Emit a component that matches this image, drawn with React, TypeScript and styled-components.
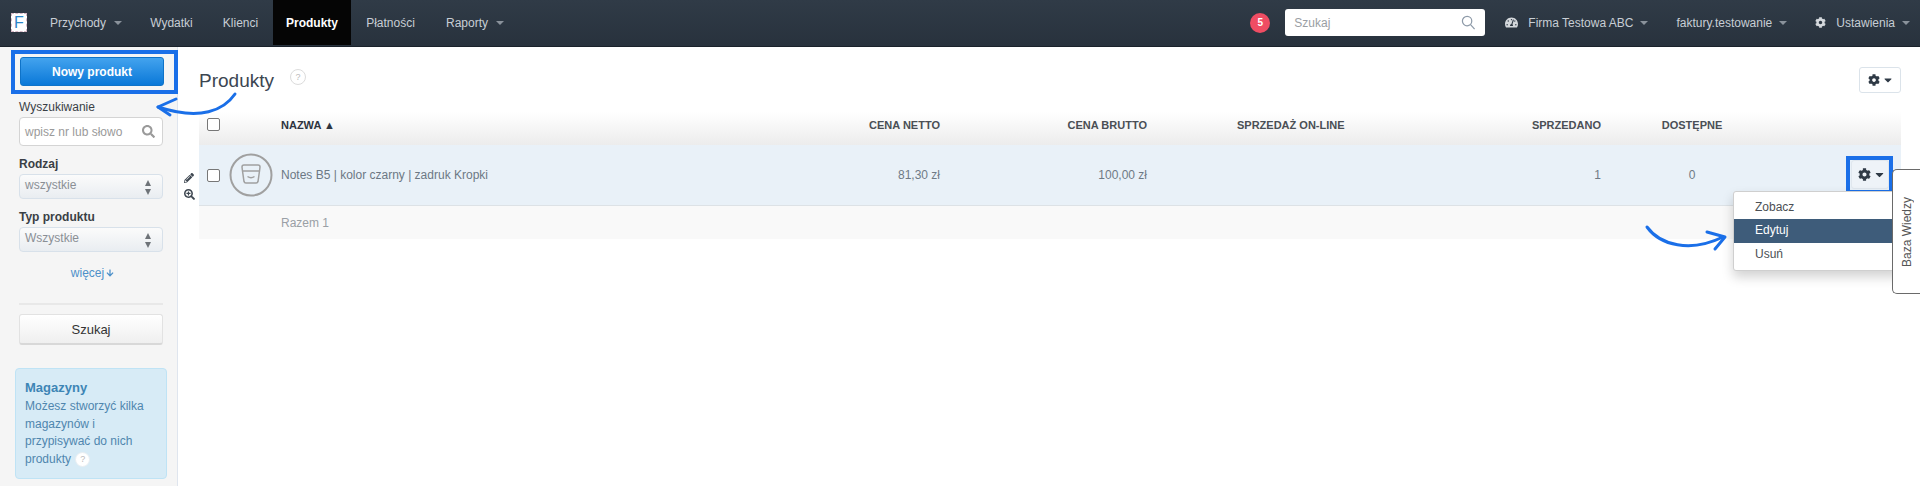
import React from 'react'
import styled, { createGlobalStyle } from 'styled-components'
import { FaCog, FaPencilAlt, FaSearchPlus, FaArrowDown, FaTachometerAlt, FaSearch, FaCaretDown } from 'react-icons/fa'

const GlobalStyle = createGlobalStyle`
  html, body {
    margin: 0;
    padding: 0;
    height: 486px;
    overflow: hidden;
    background: #fff;
    font-family: "Liberation Sans", Arial, sans-serif;
    font-size: 12px;
    color: #444;
  }
  * { box-sizing: border-box; }
`

const LEFT_NAV = [
  { label: 'Przychody', caret: true, width: 98 },
  { label: 'Wydatki', width: 73 },
  { label: 'Klienci', width: 65 },
  { label: 'Produkty', active: true, width: 78 },
  { label: 'Płatności', width: 79 },
  { label: 'Raporty', caret: true, width: 90 },
]

export default function App() {
  return (
    <Page>
      <GlobalStyle />
      <Navbar>
        <Logo>F</Logo>
        <NavList>
          {LEFT_NAV.map((item) => (
            <NavItem key={item.label} $active={item.active} $width={item.width}>
              {item.label}
              {item.caret && <Caret />}
            </NavItem>
          ))}
        </NavList>
        <NavRight>
          <Badge>5</Badge>
          <NavSearch>
            <span>Szukaj</span>
            <SearchGlyph viewBox="0 0 16 16">
              <circle cx="6.5" cy="6.5" r="5" />
              <path d="M10.2 10.2 14.5 15" />
            </SearchGlyph>
          </NavSearch>
          <NavLink $left={20}>
            <FaTachometerAlt size={13} />
            <span>Firma Testowa ABC</span>
            <Caret />
          </NavLink>
          <NavLink $left={28}>
            <span>faktury.testowanie</span>
            <Caret />
          </NavLink>
          <NavLink $left={28}>
            <FaCog size={11} />
            <span>Ustawienia</span>
            <Caret />
          </NavLink>
        </NavRight>
      </Navbar>

      <Content>
        <Sidebar>
          <PrimaryWrap>
            <PrimaryButton>Nowy produkt</PrimaryButton>
            <Highlight />
            <BackArrow viewBox="0 0 90 30">
              <path d="M79 1C68 17 45 28 2 14" />
              <path d="M20 6 2 14 14 22" />
            </BackArrow>
          </PrimaryWrap>

          <FieldLabel>Wyszukiwanie</FieldLabel>
          <SearchField>
            <span>wpisz nr lub słowo</span>
            <FaSearch size={13} />
          </SearchField>

          <FieldLabel $bold $top={11}>Rodzaj</FieldLabel>
          <SelectField>
            wszystkie
            <Spinner />
          </SelectField>

          <FieldLabel $bold $top={11}>Typ produktu</FieldLabel>
          <SelectField>
            Wszystkie
            <Spinner />
          </SelectField>

          <MoreLink>
            więcej <FaArrowDown size={8} />
          </MoreLink>

          <Divider />
          <SearchButton>Szukaj</SearchButton>

          <InfoBox>
            <InfoTitle>Magazyny</InfoTitle>
            <InfoText>
              Możesz stworzyć kilka magazynów i przypisywać do nich produkty <HelpDot $small>?</HelpDot>
            </InfoText>
          </InfoBox>
        </Sidebar>

        <Main>
          <TitleRow>
            <Title>Produkty</Title>
            <HelpDot>?</HelpDot>
            <GearButton $top>
              <FaCog size={12} />
              <FaCaretDown size={12} />
            </GearButton>
          </TitleRow>

          <TableHead>
            <CheckCell><Check /></CheckCell>
            <span />
            <NameHead>NAZWA ▲</NameHead>
            <RightCell>CENA NETTO</RightCell>
            <RightCell>CENA BRUTTO</RightCell>
            <OnlineCell>SPRZEDAŻ ON-LINE</OnlineCell>
            <RightCell>SPRZEDANO</RightCell>
            <CenterCell>DOSTĘPNE</CenterCell>
            <span />
          </TableHead>

          <TableRow>
            <RowTools>
              <FaPencilAlt size={10} />
              <FaSearchPlus size={11} />
            </RowTools>
            <CheckCell><Check /></CheckCell>
            <Thumb viewBox="0 0 44 44">
              <circle cx="22" cy="22" r="20.500" />
              <BagLines d="M13 14a2 2 0 0 1 2-2h14a2 2 0 0 1 2 2l-0.500 4h-17zM13.500 18l1.500 10.500a2 2 0 0 0 2 1.500h10a2 2 0 0 0 2-1.500l1.500-10.500M18.500 23.500c2 1.500 5 1.500 7 0" />
            </Thumb>
            <NameCell>Notes B5 | kolor czarny | zadruk Kropki</NameCell>
            <RightCell>81,30 zł</RightCell>
            <RightCell>100,00 zł</RightCell>
            <OnlineCell />
            <RightCell>1</RightCell>
            <CenterCell>0</CenterCell>
            <ActionCell>
              <GearButton>
                <FaCog size={13} />
                <FaCaretDown size={13} />
                <Highlight $tight />
              </GearButton>
              <Menu>
                <MenuItem>Zobacz</MenuItem>
                <MenuItem $active>Edytuj</MenuItem>
                <MenuItem>Usuń</MenuItem>
              </Menu>
              <ForwardArrow viewBox="0 0 84 26">
                <path d="M2 2C15 20 45 28 78 12" />
                <path d="M62 7 80 12 70 24" />
              </ForwardArrow>
            </ActionCell>
          </TableRow>

          <TableFoot>
            <FootLabel>Razem 1</FootLabel>
          </TableFoot>
        </Main>
      </Content>

      <KnowledgeTab>
        <span>Baza Wiedzy</span>
      </KnowledgeTab>
    </Page>
  )
}

const Page = styled.div`
  position: relative;
  width: 1920px;
  height: 486px;
  overflow: hidden;
`

const Navbar = styled.div`
  display: flex;
  align-items: stretch;
  height: 47px;
  padding-left: 11px;
  background: linear-gradient(#303b47, #28323d);
  border-bottom: 1px solid #1a222b;
  color: #c8ced5;
`

const Logo = styled.div`
  align-self: center;
  width: 16px;
  height: 19px;
  margin-top: -2px;
  background: #fff;
  border: 1px dashed #d5b8c5;
  color: #2a85c8;
  font-size: 16px;
  line-height: 17px;
  text-align: center;
`

const NavList = styled.div`
  display: flex;
  margin-left: 10px;
  height: 45px;
`

const NavItem = styled.div<{ $active?: boolean; $width: number }>`
  display: flex;
  align-items: center;
  justify-content: center;
  gap: 6px;
  width: ${(p) => p.$width}px;
  background: ${(p) => (p.$active ? '#050505' : 'transparent')};
  color: ${(p) => (p.$active ? '#fff' : '#c8ced5')};
  font-weight: ${(p) => (p.$active ? 700 : 400)};
  font-size: 12px;
`

const Caret = styled.i`
  display: inline-block;
  width: 0;
  height: 0;
  margin-left: 2px;
  border-left: 4px solid transparent;
  border-right: 4px solid transparent;
  border-top: 4px solid #8a929b;
`

const NavRight = styled.div`
  display: flex;
  align-items: center;
  margin-left: auto;
  padding-right: 10px;
  height: 45px;
`

const Badge = styled.div`
  display: flex;
  align-items: center;
  justify-content: center;
  width: 20px;
  height: 20px;
  border-radius: 50%;
  background: #ef4d63;
  color: #fff;
  font-size: 10px;
  font-weight: 700;
`

const NavSearch = styled.div`
  display: flex;
  align-items: center;
  justify-content: space-between;
  width: 200px;
  height: 27px;
  margin-left: 15px;
  padding: 0 9px;
  background: #fff;
  border-radius: 3px;
  color: #9a9ea3;
`

const SearchGlyph = styled.svg`
  width: 15px;
  height: 15px;
  fill: none;
  stroke: #8d9aa8;
  stroke-width: 1.3;
`

const NavLink = styled.div<{ $left: number }>`
  display: flex;
  align-items: center;
  gap: 10px;
  margin-left: ${(p) => p.$left}px;
  color: #c8ced5;
  svg { flex: none; color: #d4d8dc; }
  i { margin-left: -3px; }
`

const Content = styled.div`
  display: flex;
  height: 439px;
`

const Sidebar = styled.div`
  flex: none;
  width: 178px;
  padding: 10px 14px 0 19px;
  background: #f5f5f5;
  border-right: 1px solid #dfe5ee;
`

const PrimaryWrap = styled.div`
  position: relative;
  margin-bottom: 14px;
  margin-left: 1px;
`

const PrimaryButton = styled.div`
  display: flex;
  align-items: center;
  justify-content: center;
  width: 144px;
  height: 29px;
  border: 1px solid #0f73c8;
  border-radius: 3px;
  background: linear-gradient(#43a3ee, #0a78d8);
  color: #fff;
  font-size: 12px;
  font-weight: 700;
`

const Highlight = styled.div<{ $tight?: boolean }>`
  position: absolute;
  top: ${(p) => (p.$tight ? -5 : -7)}px;
  left: ${(p) => (p.$tight ? -6 : -9)}px;
  right: ${(p) => (p.$tight ? -5 : -15)}px;
  bottom: ${(p) => (p.$tight ? -6 : -8)}px;
  border: 4px solid #1a6fe8;
  pointer-events: none;
`

const BackArrow = styled.svg`
  position: absolute;
  left: 136px;
  top: 36px;
  width: 90px;
  height: 30px;
  overflow: visible;
  fill: none;
  stroke: #1a6fe8;
  stroke-width: 3;
  stroke-linecap: round;
  stroke-linejoin: round;
`

const FieldLabel = styled.div<{ $bold?: boolean; $top?: number }>`
  margin-top: ${(p) => p.$top ?? 0}px;
  margin-bottom: 3px;
  font-size: 12px;
  line-height: 14px;
  font-weight: ${(p) => (p.$bold ? 700 : 400)};
  color: #3a3f45;
`

const SearchField = styled.div`
  display: flex;
  align-items: center;
  justify-content: space-between;
  width: 144px;
  height: 29px;
  padding: 0 7px 0 5px;
  background: #fff;
  border: 1px solid #d4d4d4;
  border-radius: 4px;
  color: #9a9a9a;
  svg { color: #9a9a9a; }
`

const SelectField = styled.div`
  position: relative;
  display: flex;
  align-items: center;
  width: 144px;
  height: 25px;
  padding: 0 5px 3px;
  background: linear-gradient(#fbfbfb, #e9edf1);
  border: 1px solid #d8e1ea;
  border-radius: 4px;
  color: #8a8f95;
`

const Spinner = styled.i`
  position: absolute;
  right: 10px;
  top: 5px;
  width: 7px;
  height: 15px;
  &::before, &::after {
    content: '';
    position: absolute;
    left: 0;
    width: 0;
    height: 0;
    border-left: 3.500px solid transparent;
    border-right: 3.500px solid transparent;
  }
  &::before { top: 0; border-bottom: 6px solid #6e7378; }
  &::after { bottom: 0; border-top: 6px solid #6e7378; }
`

const MoreLink = styled.div`
  display: flex;
  align-items: center;
  justify-content: center;
  gap: 2px;
  margin-top: 14px;
  padding-left: 3px;
  height: 14px;
  color: #4d90c9;
`

const Divider = styled.div`
  width: 144px;
  height: 2px;
  margin-top: 23px;
  background: #e8e8e8;
`

const SearchButton = styled.div`
  display: flex;
  align-items: center;
  justify-content: center;
  width: 144px;
  height: 31px;
  margin-top: 9px;
  background: linear-gradient(#fff, #efefef);
  border: 1px solid #e2e2e2;
  border-bottom: 2px solid #d8d8d8;
  border-radius: 3px;
  color: #333;
  font-size: 13px;
`

const InfoBox = styled.div`
  width: 152px;
  height: 111px;
  margin: 23px 0 0 -4px;
  padding: 11px 9px 0;
  background: #d7ebf6;
  border: 1px solid #bfe3f5;
  border-radius: 4px;
`

const InfoTitle = styled.div`
  margin-bottom: 2px;
  color: #3d85b5;
  font-size: 13px;
  font-weight: 700;
  line-height: 16px;
`

const InfoText = styled.div`
  color: #4f86ae;
  font-size: 12px;
  line-height: 17.500px;
`

const HelpDot = styled.span<{ $small?: boolean }>`
  display: inline-flex;
  align-items: center;
  justify-content: center;
  width: ${(p) => (p.$small ? 15 : 16)}px;
  height: ${(p) => (p.$small ? 15 : 16)}px;
  margin-left: ${(p) => (p.$small ? 1 : 16)}px;
  margin-top: ${(p) => (p.$small ? 0 : -8)}px;
  vertical-align: middle;
  background: #fff;
  border: 1px solid ${(p) => (p.$small ? '#e8eef2' : '#dcdcdc')};
  border-radius: 50%;
  color: #bbb;
  font-size: 9px;
`

const Main = styled.div`
  flex: 1;
  padding: 0 19px 0 21px;
`

const TitleRow = styled.div`
  display: flex;
  align-items: center;
  height: 65px;
  padding-top: 2px;
`

const Title = styled.h1`
  margin: 0;
  font-size: 19px;
  font-weight: 400;
  color: #3c4651;
`

const GearButton = styled.div<{ $top?: boolean }>`
  position: relative;
  display: flex;
  align-items: center;
  justify-content: center;
  gap: 2px;
  width: ${(p) => (p.$top ? 42 : 38)}px;
  height: ${(p) => (p.$top ? 26 : 29)}px;
  margin-left: ${(p) => (p.$top ? 'auto' : 0)};
  margin-top: ${(p) => (p.$top ? -2 : 0)}px;
  padding-left: ${(p) => (p.$top ? 2 : 4)}px;
  background: ${(p) => (p.$top ? '#fff' : '#eef3f8')};
  border: 1px solid ${(p) => (p.$top ? '#dbe3ea' : '#e0e7ee')};
  border-radius: 3px;
  color: #2f3a46;
`

const COLUMNS = '30px 52px 559px 100px 207px 354px 100px 182px 118px'

const TableHead = styled.div`
  display: grid;
  grid-template-columns: ${COLUMNS};
  align-items: center;
  height: 33px;
  padding-bottom: 8px;
  background: linear-gradient(#fff, #ececec);
  color: #4a4f55;
  font-size: 11px;
  font-weight: 700;
`

const TableRow = styled.div`
  position: relative;
  display: grid;
  grid-template-columns: ${COLUMNS};
  align-items: center;
  height: 61px;
  background: #e9f1f8;
  border-bottom: 1px solid #dde2e6;
  color: #6f7a85;
  font-size: 12px;
`

const RowTools = styled.div`
  position: absolute;
  left: -15px;
  top: 28px;
  display: flex;
  flex-direction: column;
  gap: 6px;
  color: #3d4650;
`

const CheckCell = styled.div`
  padding-left: 8px;
  display: flex;
`

const Check = styled.div`
  width: 13px;
  height: 13px;
  background: #fff;
  border: 1px solid #777;
  border-radius: 2px;
`

const Thumb = styled.svg`
  width: 44px;
  height: 44px;
  margin-top: -1px;
  fill: none;
  stroke: #a0a0a0;
  stroke-width: 2;
`

const BagLines = styled.path`
  stroke-width: 1.500;
`

const NameHead = styled.div`
  font-size: 11px;
  color: #2e3440;
`

const NameCell = styled.div`
  color: #6c7884;
`

const RightCell = styled.div`
  text-align: right;
`

const OnlineCell = styled.div`
  padding-left: 90px;
`

const CenterCell = styled.div`
  text-align: center;
`

const ActionCell = styled.div`
  position: relative;
  display: flex;
  justify-content: flex-end;
  padding-right: 12px;
  margin-top: -2px;
`

const Menu = styled.div`
  position: absolute;
  top: 31px;
  right: 0;
  width: 168px;
  padding: 4px 0;
  background: #fff;
  border: 1px solid #cfcfcf;
  border-radius: 3px;
  box-shadow: 0 6px 12px rgba(0, 0, 0, 0.18);
  z-index: 2;
`

const MenuItem = styled.div<{ $active?: boolean }>`
  height: ${(p) => (p.$active ? 24 : 23)}px;
  padding: 0 21px;
  line-height: 23px;
  background: ${(p) => (p.$active ? '#3e5c7a' : 'transparent')};
  color: ${(p) => (p.$active ? '#fff' : '#4b4f54')};
`

const ForwardArrow = styled.svg`
  position: absolute;
  left: -138px;
  top: 65px;
  width: 84px;
  height: 26px;
  overflow: visible;
  fill: none;
  stroke: #1a6fe8;
  stroke-width: 3;
  stroke-linecap: round;
  stroke-linejoin: round;
  z-index: 3;
`

const TableFoot = styled.div`
  height: 33px;
  padding-left: 82px;
  background: #f9f9f9;
`

const FootLabel = styled.div`
  padding-top: 10px;
  color: #9aa0a6;
`

const KnowledgeTab = styled.div`
  position: absolute;
  right: 0;
  top: 169px;
  display: flex;
  align-items: center;
  justify-content: center;
  width: 28px;
  height: 125px;
  padding-top: 2px;
  background: #fff;
  border: 1px solid #6a6a6a;
  border-right: 0;
  border-radius: 5px 0 0 5px;
  color: #555;
  z-index: 4;
  span {
    writing-mode: vertical-rl;
    transform: rotate(180deg);
    font-size: 12px;
  }
`
